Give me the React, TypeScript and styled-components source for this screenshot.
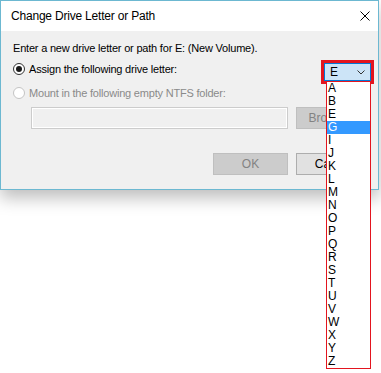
import React from "react";
import styled, { createGlobalStyle } from "styled-components";

const GlobalStyle = createGlobalStyle`
  html, body {
    margin: 0;
    min-height: 373px;
    background: #ffffff;
  }
  #root {
    min-height: 373px;
  }
`;

const uiFont = `"Liberation Sans", Arial, sans-serif`;

const Window = styled.div`
  width: 379px;
  box-sizing: border-box;
  border: 1px solid #6cb8d1;
  background: #f0f0f0;
  font-family: ${uiFont};
  font-size: 11px;
  letter-spacing: -0.2px;
  color: #000;
  box-shadow: 0 8px 16px rgba(0, 0, 0, 0.26);
`;

const TitleBar = styled.div`
  height: 30px;
  background: #ffffff;
  display: flex;
  align-items: center;
  justify-content: space-between;
  padding: 0 8px 0 10px;
`;

const Title = styled.span`
  font-size: 12px;
  color: #000;
`;

const Body = styled.div`
  display: flex;
  flex-direction: column;
  padding: 9px 7px 14px 12px;
`;

const Prompt = styled.div`
  line-height: 16px;
`;

const OptionRow = styled.div<{ $gap: number }>`
  display: flex;
  align-items: flex-start;
  justify-content: space-between;
  margin-top: ${(p) => p.$gap}px;
`;

const RadioLabel = styled.label<{ $disabled?: boolean }>`
  display: flex;
  align-items: center;
  gap: 4px;
  line-height: 16px;
  color: ${(p) => (p.$disabled ? "#8a8a8a" : "#000")};
`;

const Radio = styled.span<{ $checked?: boolean; $disabled?: boolean }>`
  width: 12px;
  height: 12px;
  box-sizing: border-box;
  border-radius: 50%;
  border: 1px solid ${(p) => (p.$disabled ? "#c4c4c4" : "#333333")};
  background: #ffffff;
  display: flex;
  align-items: center;
  justify-content: center;

  &::after {
    content: "";
    display: ${(p) => (p.$checked ? "block" : "none")};
    width: 6px;
    height: 6px;
    border-radius: 50%;
    background: #1a1a1a;
  }
`;

const Combo = styled.div`
  position: relative;
  margin-top: 2px;
  width: 47px;
  height: 18px;
  box-sizing: border-box;
  border: 1px solid #0078d7;
  background: #cce4f7;
  outline: 3px solid #e3151f;
  display: flex;
  align-items: center;
  justify-content: space-between;
  padding: 0 5px 0 5px;
  font-size: 12px;
  letter-spacing: 0;
`;

const DropList = styled.ul`
  position: absolute;
  z-index: 2;
  top: calc(100% + 2px);
  left: 1px;
  width: 45px;
  box-sizing: border-box;
  margin: 0;
  padding: 0;
  list-style: none;
  background: #ffffff;
  border: 1px solid #e3151f;
  border-top: none;
`;

const DropItem = styled.li<{ $selected?: boolean }>`
  height: 13px;
  line-height: 13px;
  padding-left: 1px;
  font-size: 12px;
  color: ${(p) => (p.$selected ? "#ffffff" : "#000")};
  background: ${(p) => (p.$selected ? "#3399ff" : "transparent")};
`;

const FolderRow = styled.div`
  display: flex;
  gap: 8px;
  margin-top: 6px;
  padding-left: 18px;
`;

const TextBox = styled.div`
  width: 257px;
  height: 22px;
  box-sizing: border-box;
  border: 1px solid #cccccc;
  box-shadow: inset 0 0 0 1px #ffffff;
  background: #f0f0f0;
`;

const Button = styled.div<{ $disabled?: boolean }>`
  width: 75px;
  height: 22px;
  box-sizing: border-box;
  display: flex;
  align-items: center;
  justify-content: center;
  border: 1px solid ${(p) => (p.$disabled ? "#bfbfbf" : "#adadad")};
  background: ${(p) => (p.$disabled ? "#cccccc" : "#e1e1e1")};
  color: ${(p) => (p.$disabled ? "#838383" : "#000")};
  font-size: 12px;
  letter-spacing: 0;
`;

const ButtonRow = styled.div`
  display: flex;
  justify-content: flex-end;
  gap: 8px;
  margin-top: 24px;
`;

const letters = ["A", "B", "E", "G", "I", "J", "K", "L", "M", "N", "O", "P", "Q", "R", "S", "T", "U", "V", "W", "X", "Y", "Z"];

const App = () => {
  return (
    <>
      <GlobalStyle />
      <Window>
        <TitleBar>
          <Title>Change Drive Letter or Path</Title>
          <svg width="10" height="10" viewBox="0 0 10 10">
            <path d="M0.5 0.5 L9.5 9.5 M9.5 0.5 L0.5 9.5" stroke="#000" strokeWidth="1" />
          </svg>
        </TitleBar>
        <Body>
          <Prompt>Enter a new drive letter or path for E: (New Volume).</Prompt>
          <OptionRow $gap={5}>
            <RadioLabel>
              <Radio $checked />
              Assign the following drive letter:
            </RadioLabel>
            <Combo>
              <span>E</span>
              <svg width="8" height="5" viewBox="0 0 8 5">
                <path d="M0.5 0.5 L4 4 L7.5 0.5" fill="none" stroke="#333" strokeWidth="1" />
              </svg>
              <DropList>
                {letters.map((l) => (
                  <DropItem key={l} $selected={l === "G"}>
                    {l}
                  </DropItem>
                ))}
              </DropList>
            </Combo>
          </OptionRow>
          <OptionRow $gap={4}>
            <RadioLabel $disabled>
              <Radio $disabled />
              Mount in the following empty NTFS folder:
            </RadioLabel>
          </OptionRow>
          <FolderRow>
            <TextBox />
            <Button $disabled>Browse...</Button>
          </FolderRow>
          <ButtonRow>
            <Button $disabled>OK</Button>
            <Button>Cancel</Button>
          </ButtonRow>
        </Body>
      </Window>
    </>
  );
};

export default App;
